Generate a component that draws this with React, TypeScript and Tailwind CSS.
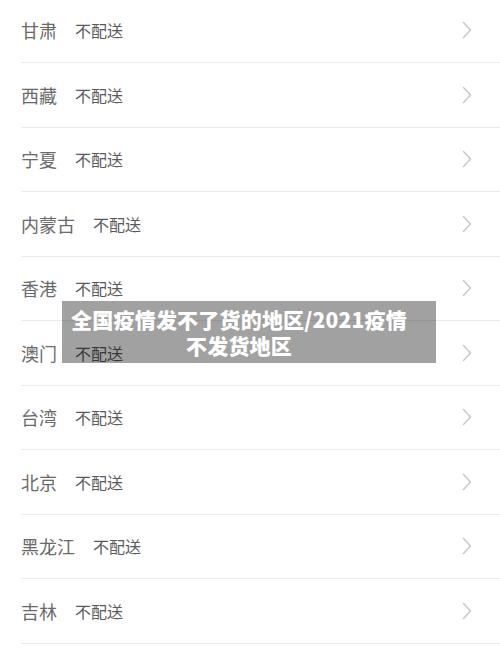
import React from "react";

const REGIONS = ["甘肃", "西藏", "宁夏", "内蒙古", "香港", "澳门", "台湾", "北京", "黑龙江", "吉林"];

function Chevron() {
  return (
    <svg width="10" height="18" viewBox="0 0 10 18" fill="none" className="shrink-0">
      <polyline points="1.5,1.5 8.5,9 1.5,16.5" stroke="#c4c4c4" strokeWidth="1.3" strokeLinejoin="round" strokeLinecap="round" />
    </svg>
  );
}

export default function App() {
  return (
    <div
      className="relative w-[500px] h-[666px] overflow-hidden bg-white"
      style={{ fontFamily: '"Noto Sans CJK SC", "Noto Sans", sans-serif' }}
    >
      <div className="-mt-[1.5px]">
        {REGIONS.map((name) => (
          <div key={name} className="ml-[21px] h-[64.5px] border-b border-[#ebebeb] flex items-center pr-[28px]">
            <span className="text-[18px] text-[#6a6a6a] leading-none">{name}</span>
            <span className="ml-[18px] text-[16px] text-[#5a5a5a] leading-none">不配送</span>
            <div className="flex-1" />
            <Chevron />
          </div>
        ))}
      </div>

      {/* title caption over the list */}
      <div className="absolute left-[62px] top-[301px] w-[374px] h-[62px] bg-black/[0.37] flex items-center justify-center pr-[20px]">
        <p className="text-white font-black text-[21px] leading-[26.5px] text-center tracking-[0.2px]">
          全国疫情发不了货的地区/2021疫情
          <br />
          不发货地区
        </p>
      </div>
    </div>
  );
}
